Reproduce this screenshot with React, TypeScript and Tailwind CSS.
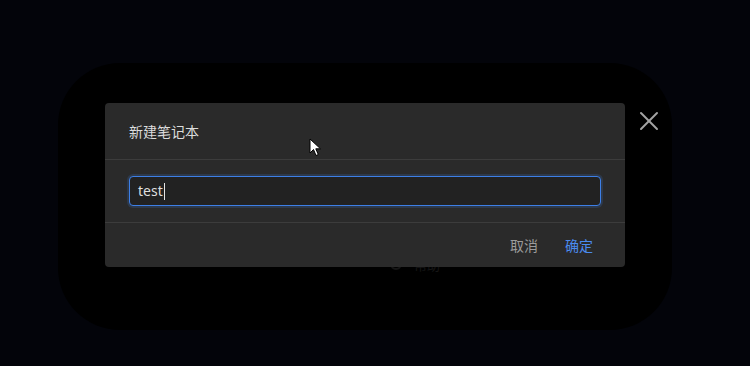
import { X } from "lucide-react";

function Cursor() {
  return (
    <svg width="14" height="20" viewBox="0 0 14 20" className="absolute left-[309px] top-[138px] z-30">
      <path d="M1 1 L1 15 L4.5 11.5 L7 17.5 L9.3 16.5 L6.8 10.8 L11.5 10.8 Z" fill="#fff" stroke="#000" strokeWidth="1" strokeLinejoin="round" />
    </svg>
  );
}

export default function App() {
  return (
    <div className="relative h-[366px] w-[750px] overflow-hidden bg-[#03040a] font-['Noto_Sans_CJK_SC','Noto_Sans',sans-serif]">
      <div className="absolute left-[58px] top-[63px] flex h-[267px] w-[614px] items-end justify-center rounded-[62px] bg-black pb-[56px] pl-[100px]">
        <div className="flex items-center gap-3 text-[13px] text-[#161616]">
          <span className="size-[12px] rounded-full border-2 border-[#161616]" />
          <span>帮助</span>
        </div>
      </div>

      <button type="button" aria-label="关闭" className="absolute left-[633px] top-[105px] z-20 text-[#a3a3a3]">
        <X size={32} strokeWidth={1.5} />
      </button>

      <div className="absolute left-[105px] top-[103px] z-10 flex w-[520px] flex-col rounded-[4px] bg-[#2a2a2a]">
        <div className="flex h-[57px] items-center border-b border-[#3c3c3c] px-6">
          <span className="text-[14px] text-[#dcdcdc]">新建笔记本</span>
        </div>
        <div className="border-b border-[#3c3c3c] px-6 pb-4 pt-[16px]">
          <div className="flex h-[30px] items-center rounded-[4px] border border-[#3d7fe6] bg-[#222222] px-2 shadow-[0_0_0_2px_rgba(61,127,230,0.18)]">
            <span className="text-[14px] leading-none text-[#dedede] font-['Noto_Sans',sans-serif]">test</span>
            <span className="ml-[1px] h-[17px] w-px bg-[#e5e5e5]" />
          </div>
        </div>
        <div className="flex h-[44px] items-center justify-end gap-[27px] pr-8">
          <span className="text-[14px] text-[#9c9c9c]">取消</span>
          <span className="text-[14px] text-[#4a8bf0]">确定</span>
        </div>
      </div>

      <Cursor />
    </div>
  );
}
